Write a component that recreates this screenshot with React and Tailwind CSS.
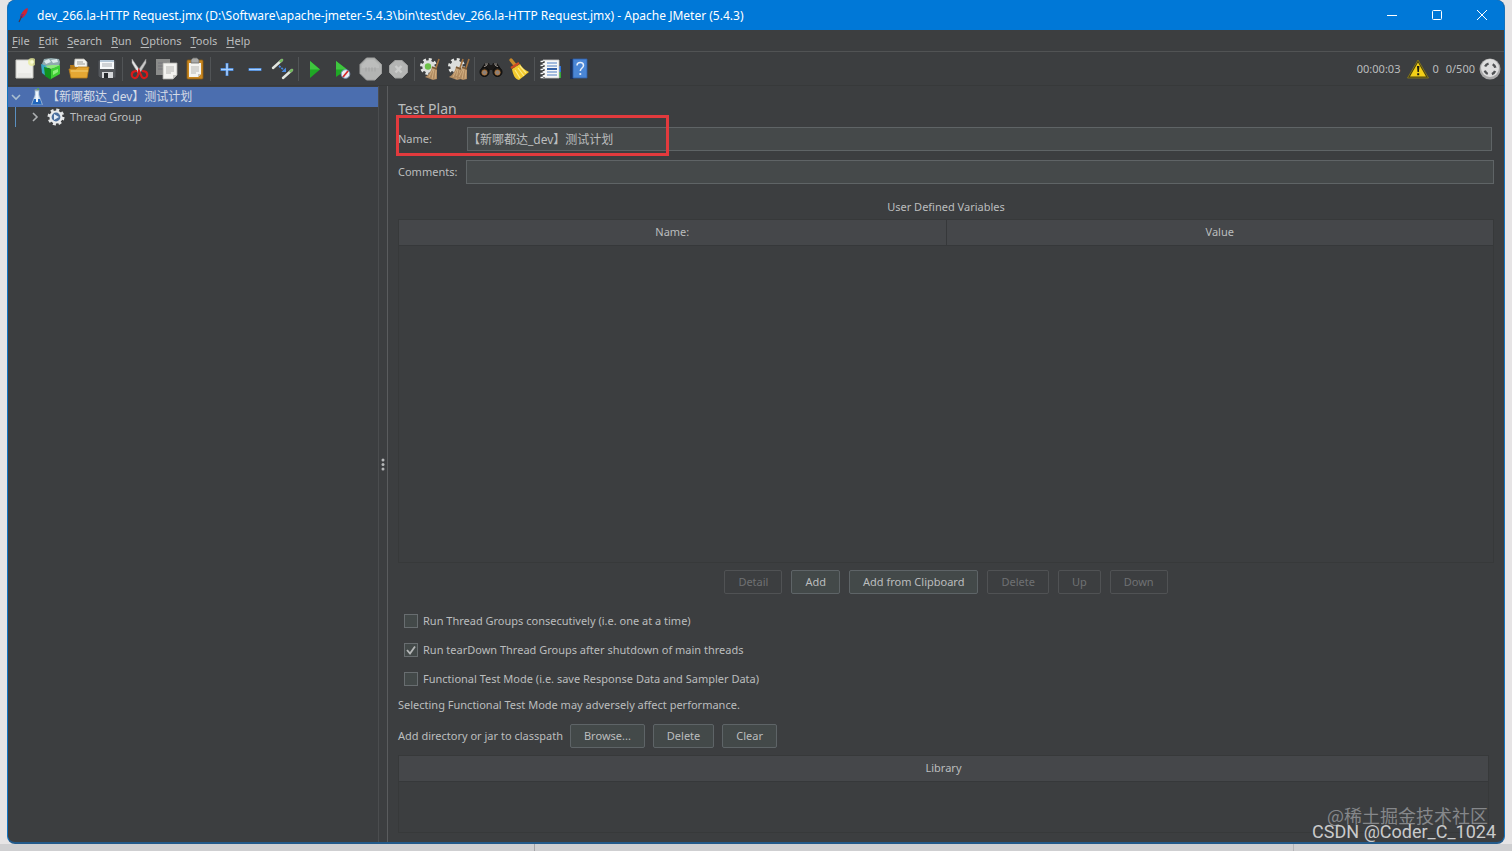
const MENUS = ["File", "Edit", "Search", "Run", "Options", "Tools", "Help"];

const CHECKS = [
  { id: "consecutive", text: "Run Thread Groups consecutively (i.e. one at a time)", checked: false },
  { id: "teardown", text: "Run tearDown Thread Groups after shutdown of main threads", checked: true },
  { id: "functional", text: "Functional Test Mode (i.e. save Response Data and Sampler Data)", checked: false },
];

function Svg({ children, className = "w-6 h-6" }) {
  return (
    <svg viewBox="0 0 24 24" fill="none" className={className} aria-hidden="true">
      {children}
    </svg>
  );
}

/* Toolbar drawings */
function NewIcon() {
  return (
    <Svg>
      <path d="M5 3h17v18H5z" fill="#f1f1ee" stroke="#c9c9c4" />
      <path d="M7 19h13M7 17h13" stroke="#e2e2de" />
      <circle cx="21" cy="5" r="4" fill="#e8ee9a" opacity=".75" />
      <circle cx="21" cy="5" r="1.8" fill="#fbfcd8" />
    </Svg>
  );
}

function TemplatesIcon() {
  return (
    <Svg>
      <path d="M3 7l2-5 7-1 8 1 1 3-1 6H5z" fill="#8fa9ad" />
      <path d="M5 4l5-2 2 3-5 2zM12 3l6-1 1 3-5 1z" fill="#dce8ea" />
      <path d="M2 7l6 2v11l-5-4z" fill="#3aa7c4" />
      <path d="M5 10l7 2v11l-6-4z" fill="#12921f" />
      <path d="M12 12l9-4v9l-9 5z" fill="#3fcf35" />
      <path d="M6 9l7-1 8 0-9 4z" fill="#8ee97a" />
      <path d="M14 14l5-2v3l-5 3z" fill="#8df07c" />
    </Svg>
  );
}

function OpenIcon() {
  return (
    <Svg>
      <path d="M7 10l1-8h9l3 3v6z" fill="#f4f4f0" stroke="#b5b5ae" strokeWidth=".8" />
      <path d="M10 5h6M10 7h8" stroke="#9b9b96" />
      <path d="M3 8h4l1 2h13l-1 11H4z" fill="#b87a16" />
      <path d="M2 12h7l2-2h11l-2 11H4z" fill="#e5a733" stroke="#b87c1a" strokeWidth=".8" />
      <path d="M4 14h17" stroke="#f4cf77" />
    </Svg>
  );
}

function SaveIcon() {
  return (
    <Svg>
      <path d="M3 3h17l1 1v17H5l-2-2z" fill="#55585c" stroke="#3a3d40" />
      <path d="M5 3h14v9H5z" fill="#f6f8fa" />
      <path d="M5 3h14v2H5z" fill="#b4c7d8" />
      <path d="M7 7h10M7 9h10" stroke="#a8adb2" />
      <path d="M7 15h11v6H7z" fill="#d5d7d9" />
      <path d="M9 16h4v5H9z" fill="#25282b" />
    </Svg>
  );
}

function CutIcon() {
  return (
    <Svg>
      <path d="M5 2l9 13-3 1L5 6z" fill="#e5e5e5" stroke="#9c9c9c" strokeWidth=".5" />
      <path d="M19 2l-9 13 3 1 6-10z" fill="#c9c9c9" stroke="#8d8d8d" strokeWidth=".5" />
      <path d="M10 14c-3 0-6 1-5 5 1 3 5 3 6-1l1-4 2 4c1 4 5 4 6 1 1-4-2-5-5-5" stroke="#d91a1a" strokeWidth="2.2" />
    </Svg>
  );
}

function CopyIcon() {
  return (
    <Svg>
      <path d="M1 2h14v16H1z" fill="#8a8b8a" />
      <path d="M3 6h9M3 9h9M3 12h9" stroke="#74757a" />
      <path d="M8 6h14v12l-4 4H8z" fill="#f3f3f0" stroke="#a9a9a6" strokeWidth=".8" />
      <path d="M11 10h8M11 12h8M11 14h8M11 16h5" stroke="#a5a5a2" strokeWidth=".8" />
      <path d="M18 22v-4h4z" fill="#c4c4c0" />
    </Svg>
  );
}

function PasteIcon() {
  return (
    <Svg>
      <rect x="4" y="3" width="16" height="19" rx="1" fill="#c98720" stroke="#8d5d12" strokeWidth=".8" />
      <path d="M6 6h12v11l-3 3H6z" fill="#f4f4f0" />
      <path d="M8 10h8M8 12h8M8 14h8M8 16h5" stroke="#aaa9a5" strokeWidth=".8" />
      <path d="M8 3l2-2h4l2 2v3H8z" fill="#a9aaa8" stroke="#696a68" strokeWidth=".8" />
      <path d="M15 20v-3h3z" fill="#c7c7c2" />
    </Svg>
  );
}

function PlusIcon() {
  return (
    <Svg>
      <path d="M12 6v13M5.500 12.500h13" stroke="#3f7fd0" strokeWidth="3" />
      <path d="M12 6.500v12M6 12.500h12" stroke="#a9d0ff" strokeWidth="1.600" />
    </Svg>
  );
}

function MinusIcon() {
  return (
    <Svg>
      <path d="M5.500 12.500h13" stroke="#3f7fd0" strokeWidth="3" />
      <path d="M6 12.500h12" stroke="#a9d0ff" strokeWidth="1.600" />
    </Svg>
  );
}

function ToggleIcon() {
  return (
    <Svg>
      <path d="M2 11L11 3M12 21l9-8" stroke="#e3e6df" strokeWidth="2.400" strokeLinecap="round" />
      <path d="M9.500 4.500L11 3M19.500 14.500L21 13" stroke="#6fb85a" strokeWidth="2.400" strokeLinecap="round" />
      <path d="M8 9l5 4" stroke="#4a8ae0" strokeWidth="1.800" strokeDasharray="2 1" />
      <path d="M15 10.500v4.500h-4.500z" fill="#4a8ae0" />
    </Svg>
  );
}

function PlayIcon() {
  return (
    <Svg>
      <path d="M7 4l10 8.500L7 21z" fill="#1fa825" />
      <path d="M7 4l10 8.500H7z" fill="#3fc63f" />
    </Svg>
  );
}

function PlayNoTimersIcon() {
  return (
    <Svg>
      <path d="M5 4l11 8.500L5 20z" fill="#1fa825" />
      <path d="M5 4l11 8.500H5z" fill="#3fc63f" />
      <circle cx="14.500" cy="17" r="4.300" fill="#e9edf3" stroke="#7f9cc4" />
      <path d="M12 20l5-6" stroke="#d42a2a" strokeWidth="1.800" />
    </Svg>
  );
}

function StopIcon() {
  return (
    <Svg>
      <path d="M7.500 1h8L22.500 7.500v9L16 23H7.500L1 16.500v-9z" fill="#b3b4b3" stroke="#a0a1a0" />
      <path d="M8 3h7l5 5v3H3V8z" fill="#bcbdbc" />
      <path d="M6 12.500h12" stroke="#abacab" strokeWidth="4" strokeDasharray="2 1" />
    </Svg>
  );
}

function ShutdownIcon() {
  return (
    <Svg>
      <path d="M8 3.500h7l5.500 5v7l-5.500 5.500H8l-5.500-5.500v-7z" fill="#b4b5b4" stroke="#a0a1a0" />
      <path d="M8.500 9l6 6.500M14.500 9l-6 6.500" stroke="#cbcccb" strokeWidth="2.400" />
    </Svg>
  );
}

function Broom({ x = 0 }) {
  return (
    <g transform={`translate(${x} 0)`}>
      <path d="M20 2l-3 9" stroke="#a5733f" strokeWidth="1.600" />
      <path d="M13 10l5 2 0 10-4 1-8-3c4-2 6-6 7-10z" fill="#b08a60" />
      <path d="M14 12l-4 8M15 12l-2 10M17 13l-1 9" stroke="#d9b88a" strokeWidth=".8" />
      <path d="M13 10l5 2" stroke="#7c5a34" strokeWidth="1.500" />
    </g>
  );
}

function Gear() {
  return (
    <>
      <circle cx="9.500" cy="9.500" r="7" stroke="#e4e6e4" strokeWidth="3" strokeDasharray="2.900 2.600" />
      <circle cx="9.500" cy="9.500" r="6.200" fill="#dcdedc" />
    </>
  );
}

function ClearIcon() {
  return (
    <Svg>
      <Gear />
      <circle cx="9" cy="9.500" r="3.200" fill="#6cc048" />
      <Broom />
    </Svg>
  );
}

function ClearAllIcon() {
  return (
    <Svg>
      <Gear />
      <Broom x={-4} />
      <Broom x={2} />
    </Svg>
  );
}

function BinocularsIcon() {
  return (
    <Svg>
      <path d="M6 6h4l1 2h2l1-2h4l3 4 2 6h-8l-2-3h-2l-2 3H1l2-6z" fill="#1b1918" />
      <path d="M6 7h3M15 7h3M5 10l3-2M16 8l3 2" stroke="#a09a93" />
      <circle cx="5.500" cy="15" r="4.500" fill="#211e1b" stroke="#0c0b0a" />
      <circle cx="18.500" cy="15" r="4.500" fill="#211e1b" stroke="#0c0b0a" />
      <circle cx="5.500" cy="15.500" r="2.600" fill="#8b8079" stroke="#c0762c" strokeWidth=".8" />
      <circle cx="18.500" cy="15.500" r="2.600" fill="#8b8079" stroke="#c0762c" strokeWidth=".8" />
    </Svg>
  );
}

function SweepIcon() {
  return (
    <Svg>
      <path d="M4 3l4 5" stroke="#c98a2b" strokeWidth="3.400" strokeLinecap="round" />
      <path d="M5 12l8-5c2 4 5 6 9 8l-10 8c-4-1-6-5-7-11z" fill="#f2c92e" />
      <path d="M8 13l5 8M11 11l6 8M13 9l6 7" stroke="#fbea86" strokeWidth="1.200" />
      <path d="M4 11l8-5" stroke="#cf4b22" strokeWidth="2.200" />
    </Svg>
  );
}

function FunctionHelperIcon() {
  return (
    <Svg>
      <path d="M20 9h2v6h-2z" fill="#2f72d8" />
      <path d="M20 15h2v6h-2z" fill="#36a83a" />
      <path d="M4 3h16v18H4z" fill="#f7f7f7" stroke="#c4c4c4" strokeWidth=".8" />
      <path d="M8 6h10M8 9h10M8 15h10M8 18h10" stroke="#4f7fc4" strokeWidth="1.200" />
      <path d="M8 12h10" stroke="#1d4f9e" strokeWidth="1.800" />
      <path d="M4 4v17" stroke="#1b1b1b" strokeWidth="3" strokeDasharray="2 2" />
      <path d="M1.500 4.500h3M1.500 8.500h3M1.500 12.500h3M1.500 16.500h3M1.500 20.500h3" stroke="#f4f4f4" strokeWidth="1.300" />
    </Svg>
  );
}

function HelpIcon() {
  return (
    <Svg>
      <path d="M3 2h4v20H3z" fill="#1c2f55" />
      <path d="M6 2h14v19H6z" fill="#4a86d6" stroke="#2e5ea8" strokeWidth=".8" />
      <path d="M10 8.500c0-4 6.500-4 6.500 0 0 2.500-3.200 2.500-3.200 5.500" stroke="#e6eefa" strokeWidth="1.500" />
      <circle cx="13.300" cy="17" r="1.100" fill="#e6eefa" />
    </Svg>
  );
}

const TOOLBAR = [
  [["New", NewIcon], ["Templates", TemplatesIcon], ["Open", OpenIcon], ["Save", SaveIcon]],
  [["Cut", CutIcon], ["Copy", CopyIcon], ["Paste", PasteIcon]],
  [["Expand All", PlusIcon], ["Collapse All", MinusIcon], ["Toggle", ToggleIcon]],
  [["Start", PlayIcon], ["Start no pauses", PlayNoTimersIcon], ["Stop", StopIcon], ["Shutdown", ShutdownIcon]],
  [["Clear", ClearIcon], ["Clear All", ClearAllIcon]],
  [["Search", BinocularsIcon], ["Reset Search", SweepIcon]],
  [["Function Helper", FunctionHelperIcon], ["Help", HelpIcon]],
];

function TitleBar() {
  return (
    <header className="h-[30px] shrink-0 flex items-center bg-[#0078d7] text-white pl-[7px]">
      <svg viewBox="0 0 16 16" className="w-4 h-4 mr-[6px]" aria-hidden="true">
        <path d="M12.500 1c1 2-1 7-5 10l-2-1c0-4 4-8 7-9z" fill="#cf2436" />
        <path d="M9 7l-2 4-2-1 1-3z" fill="#7b2a73" />
        <path d="M6.500 9.500L4 15" stroke="#4d3340" strokeWidth="1.200" />
      </svg>
      <h1 className="text-[12px] leading-4 pt-px whitespace-nowrap">
        dev_266.la-HTTP Request.jmx (D:\Software\apache-jmeter-5.4.3\bin\test\dev_266.la-HTTP Request.jmx) - Apache JMeter (5.4.3)
      </h1>
      <div className="ml-auto flex self-stretch">
        <button aria-label="Minimize" className="w-[45px] flex items-center justify-center">
          <svg viewBox="0 0 12 12" className="w-3 h-3" stroke="#fff" fill="none"><path d="M1 6.500h10" /></svg>
        </button>
        <button aria-label="Maximize" className="w-[45px] flex items-center justify-center">
          <svg viewBox="0 0 12 12" className="w-3 h-3" stroke="#fff" fill="none"><rect x="1.500" y="1.500" width="9" height="9" rx="1" /></svg>
        </button>
        <button aria-label="Close" className="w-[45px] flex items-center justify-center">
          <svg viewBox="0 0 12 12" className="w-3 h-3" stroke="#fff" fill="none"><path d="M1 1l10 10M11 1L1 11" /></svg>
        </button>
      </div>
    </header>
  );
}

function Toolbar() {
  return (
    <div className="h-[35px] shrink-0 flex items-center border-t border-[#515354] border-b border-b-[#37393a] pl-px pr-[3px]">
      {TOOLBAR.map((group, i) => (
        <div key={i} className="flex items-center">
          {i > 0 && <span className="w-px h-6 ml-px mr-[2px] bg-[#515456]" />}
          {group.map(([label, Icon]) => (
            <button key={label} aria-label={label} className="w-7 h-7 flex items-center justify-center">
              <Icon />
            </button>
          ))}
        </div>
      ))}
      <div className="ml-auto flex items-center gap-[7px]">
        <span>00:00:03</span>
        <div className="flex items-center gap-[3px]">
          <button aria-label="Show log">
            <svg viewBox="0 0 22 20" className="w-[22px] h-5" aria-hidden="true">
              <path d="M11 1L21.500 19H.5z" fill="#4a4210" stroke="#8d7d1c" strokeWidth=".8" />
              <path d="M11 3.500L19 17.500H3z" fill="#f3cf17" />
              <path d="M10 7h2.400l-.5 6h-1.400zM10.200 14.300h2v2h-2z" fill="#1a1a12" />
            </svg>
          </button>
          <span>0</span>
        </div>
        <div className="flex items-center gap-1">
          <span>0/500</span>
          <svg viewBox="0 0 22 22" className="w-[22px] h-[22px]" aria-hidden="true">
            <circle cx="11" cy="11" r="10.500" fill="#a8a8a8" />
            <circle cx="11" cy="10" r="9" fill="#dedede" />
            <circle cx="11" cy="11" r="5.500" fill="none" stroke="#505254" strokeWidth="2.400" strokeDasharray="4.320 4.320" strokeDashoffset="-2.160" />
          </svg>
        </div>
      </div>
    </div>
  );
}

function TestTree() {
  return (
    <nav className="w-[371px] shrink-0 border-r border-[#4b4d4f] pt-px">
      <button className="w-full h-5 flex items-center bg-[#4b6eaf] text-[#d5dbe6] pl-[2px]">
        <svg viewBox="0 0 12 12" className="w-3 h-3 mr-[9px]" fill="none" stroke="#a9bfd0" strokeWidth="1.600"><path d="M2 4l4 4 4-4" /></svg>
        <svg viewBox="0 0 12 18" className="w-3 h-[18px] mr-1" aria-hidden="true">
          <path d="M4 2h4v5l3.500 9.500H.5L4 7z" fill="#d5e3f1" stroke="#93aecb" strokeWidth=".6" />
          <path d="M3 11h6l2 5.500H1z" fill="#2166bd" />
          <path d="M5 4h2v10H5z" fill="#f0f6fc" />
          <path d="M3.500 2h5" stroke="#8b9692" />
          <circle cx="7" cy="1" r="1" fill="#5aa84b" />
        </svg>
        <span className="text-[12px]">【新哪都达_dev】测试计划</span>
      </button>
      <button className="w-full h-5 flex items-center">
        <span className="w-px h-5 ml-[7px] mr-[13px] bg-[#5a8fc0]" />
        <svg viewBox="0 0 12 12" className="w-3 h-3 mr-[6px]" fill="none" stroke="#adb0b2" strokeWidth="1.600"><path d="M4 2l4 4-4 4" /></svg>
        <svg viewBox="0 0 18 18" className="w-[18px] h-[18px] mr-[5px]" fill="none" aria-hidden="true">
          <circle cx="9" cy="9" r="7" stroke="#e3e5e6" strokeWidth="3" strokeDasharray="2.900 2.600" />
          <circle cx="9" cy="9" r="5.500" fill="#4c6f9e" stroke="#e8eaeb" strokeWidth="2.200" />
          <path d="M7 6l5 3-5 3z" fill="#e2ecf7" />
        </svg>
        <span>Thread Group</span>
      </button>
    </nav>
  );
}

function Button({ children, disabled }) {
  return (
    <button
      disabled={disabled}
      className="h-6 px-[13px] rounded-[2px] border border-[#5e6467] bg-[#434949] disabled:border-[#505254] disabled:bg-transparent disabled:text-[#6f7173]"
    >
      {children}
    </button>
  );
}

function Check({ id, text, checked }) {
  return (
    <div className="flex items-center h-[29px] pl-[6px] gap-[5px]">
      <span className="grid">
        <input
          id={id}
          type="checkbox"
          defaultChecked={checked}
          className="peer col-start-1 row-start-1 appearance-none w-[14px] h-[14px] border border-[#686d70] bg-[#434949]"
        />
        <svg viewBox="0 0 14 14" className="hidden peer-checked:block col-start-1 row-start-1 w-[14px] h-[14px] pointer-events-none" fill="none" stroke="#b4b6b7" strokeWidth="1.800">
          <path d="M3 7l3 3.500L11 3.500" />
        </svg>
      </span>
      <label htmlFor={id}>{text}</label>
    </div>
  );
}

function TestPlan() {
  return (
    <main className="flex-1 min-w-0 flex flex-col border-l border-[#5a5c5e] px-[10px]">
      <h2 className="mt-[13px] text-[14px] leading-5">Test Plan</h2>

      <div className="relative mt-2 flex items-center pr-[2px]">
        <label htmlFor="name" className="w-[69px] shrink-0">Name:</label>
        <input
          id="name"
          defaultValue="【新哪都达_dev】测试计划"
          className="flex-1 min-w-0 h-6 border border-[#5f6466] bg-[#45494a] text-[12px]"
        />
        <div className="absolute left-[-2px] top-[-12px] w-[273px] h-[41px] border-[3px] border-[#e23a3d] pointer-events-none" />
      </div>
      <div className="mt-[9px] flex items-center">
        <label htmlFor="comments" className="w-[68px] shrink-0">Comments:</label>
        <input id="comments" className="flex-1 min-w-0 h-6 border border-[#5f6466] bg-[#45494a] px-1" />
      </div>

      <p className="mt-[15px] text-center leading-4">User Defined Variables</p>
      <div className="mt-1 flex-1 min-h-0 border border-[#37393a]">
        <table className="w-full table-fixed">
          <thead>
            <tr className="h-[25px] bg-[#45474a] border-b border-[#36383a]">
              <th className="font-normal border-r border-[#36383a]">Name:</th>
              <th className="font-normal">Value</th>
            </tr>
          </thead>
        </table>
      </div>

      <div className="mt-[7px] flex justify-center gap-[9px]">
        <Button disabled>Detail</Button>
        <Button>Add</Button>
        <Button>Add from Clipboard</Button>
        <Button disabled>Delete</Button>
        <Button disabled>Up</Button>
        <Button disabled>Down</Button>
      </div>

      <div className="mt-3">
        {CHECKS.map((c) => (
          <Check key={c.id} {...c} />
        ))}
      </div>
      <p className="mt-1 leading-4">Selecting Functional Test Mode may adversely affect performance.</p>

      <div className="mt-[11px] flex items-center gap-2">
        <span className="-mr-px">Add directory or jar to classpath</span>
        <Button>Browse...</Button>
        <Button>Delete</Button>
        <Button>Clear</Button>
      </div>
      <div className="mt-[7px] mr-[5px] h-[78px] shrink-0 border border-[#37393a]">
        <table className="w-full">
          <thead>
            <tr className="h-[25px] bg-[#45474a] border-b border-[#36383a]">
              <th className="font-normal">Library</th>
            </tr>
          </thead>
        </table>
      </div>
      <div className="h-[9px] shrink-0" />
    </main>
  );
}

export default function App() {
  return (
    <div className="relative h-screen min-h-[600px] flex flex-col px-[7px] bg-[#e6e4e5] font-['Noto_Sans','Noto_Sans_CJK_SC',sans-serif] text-[11px] leading-4 text-[#bbbdbe]">
      <div className="flex-1 min-h-0 flex flex-col overflow-hidden rounded-lg border-x border-b-2 border-[#1273c0] border-b-[#235a8a] bg-[#3c3e40]">
        <TitleBar />
        <div className="h-[21px] shrink-0 flex items-center gap-[9px] pl-1">
          {MENUS.map((m) => (
            <button key={m}>
              <span className="underline underline-offset-2">{m[0]}</span>
              {m.slice(1)}
            </button>
          ))}
        </div>
        <Toolbar />
        <div className="flex-1 min-h-0 flex">
          <TestTree />
          <div className="w-2 shrink-0 flex items-center justify-center">
            <svg viewBox="0 0 4 14" className="w-1 h-[14px]" fill="#b4b6b7" aria-hidden="true">
              <circle cx="2" cy="3" r="1.500" />
              <circle cx="2" cy="7.500" r="1.500" />
              <circle cx="2" cy="12" r="1.500" />
            </svg>
          </div>
          <TestPlan />
        </div>
      </div>

      {/* Strip of desktop below the window */}
      <div className="h-[7px] shrink-0 flex bg-[#cfcfd1] -mx-[7px]">
        <div className="w-[535px] border-r border-[#a5a5a8]" />
        <div className="w-[759px] border-r border-[#b5b5b8]" />
      </div>

      <div className="absolute right-4 bottom-[11px] text-right pointer-events-none">
        <p className="text-[18px] leading-[18px] mr-2 text-[#85878a] font-['Noto_Sans_CJK_SC',sans-serif]">@稀土掘金技术社区</p>
        <p className="text-[18px] leading-4 text-[#c9cacb] font-['Roboto',sans-serif]">CSDN @Coder_C_1024</p>
      </div>
    </div>
  );
}
